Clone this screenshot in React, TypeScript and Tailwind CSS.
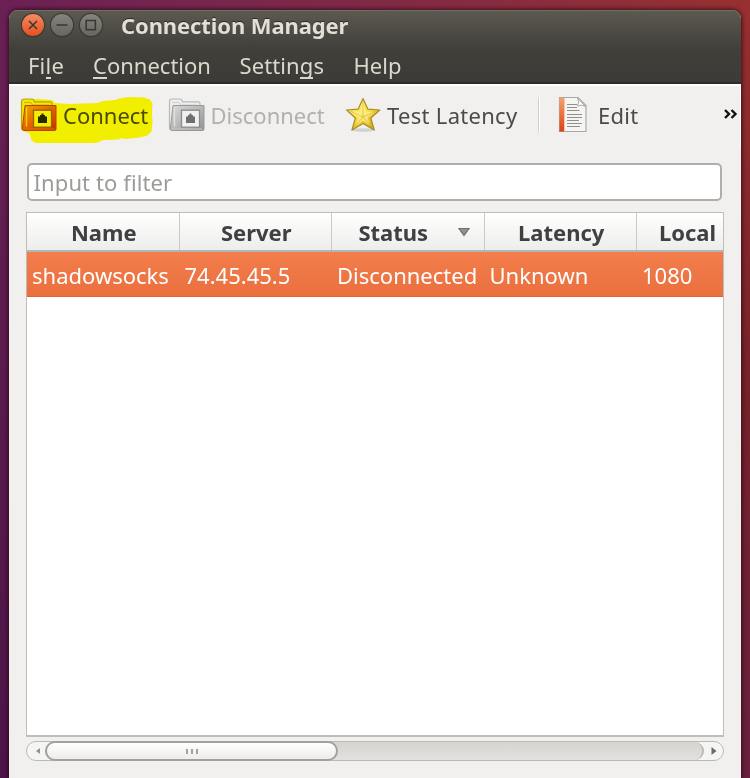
import type { ReactNode } from "react";

function Mnemonic({ children }: { children: ReactNode }) {
  return (
    <span className="relative">
      {children}
      <span className="absolute inset-x-0 top-[27px] h-[2px] bg-[#dcd8ce]" />
    </span>
  );
}

function WindowButton({ kind }: { kind: "close" | "minimize" | "maximize" }) {
  const close = kind === "close";
  return (
    <svg width="26" height="26" viewBox="0 0 26 26" className="shrink-0">
      <defs>
        <linearGradient id={`wb-${kind}`} x1="0" y1="0" x2="0" y2="1">
          <stop offset="0" stopColor={close ? "#f58a62" : "#84837c"} />
          <stop offset="1" stopColor={close ? "#e5501f" : "#67665f"} />
        </linearGradient>
      </defs>
      <circle cx="13" cy="13" r="12.2" fill="#34332f" opacity="0.75" />
      <circle cx="13" cy="13" r="11" fill={`url(#wb-${kind})`} />
      <g stroke="#383631" strokeWidth="1.5" fill="none">
        {close && <path d="M9 9l8 8M17 9l-8 8" />}
        {kind === "minimize" && <path d="M7.5 13h11" />}
        {kind === "maximize" && <rect x="8.2" y="8.5" width="9.2" height="9.2" />}
      </g>
    </svg>
  );
}

function FolderIcon({ active }: { active?: boolean }) {
  const id = active ? "on" : "off";
  return (
    <svg width="38" height="36" viewBox="0 0 38 36" className="shrink-0">
      <defs>
        <linearGradient id={`fold-${id}`} x1="0" y1="0" x2="1" y2="1">
          <stop offset="0" stopColor={active ? "#f0a93a" : "#dadada"} />
          <stop offset="0.5" stopColor={active ? "#e3661c" : "#b8b8b8"} />
          <stop offset="1" stopColor={active ? "#c92a0c" : "#929292"} />
        </linearGradient>
      </defs>
      <path
        d="M1.5 32V4.5Q1.5 2 4 2h8q1.5 0 2 1.5l.5 1.3H30q2 0 2 2V32Z"
        fill={active ? "#f0ead0" : "#eeeeee"}
        stroke={active ? "#b3a555" : "#b9b9b9"}
        strokeWidth="1.2"
      />
      <path d="M4 5.5h7l1.5 2.5H29" fill="none" stroke={active ? "#e0a765" : "#d0d0d0"} />
      <path
        d="M5 8.5h31V32q0 1.5-1.5 1.5H3.5Q2 33.5 2.4 31.5Z"
        fill={`url(#fold-${id})`}
        stroke={active ? "#b0480f" : "#999999"}
        strokeWidth="1"
      />
      <path d="M6.5 10.5v19" stroke={active ? "#ffd27a" : "#e2e2e2"} strokeWidth="1.3" />
      <path d="M4 32h30" stroke={active ? "#e1742c" : "#c7c7c7"} />
      <rect
        x="13.5"
        y="13.2"
        width="18"
        height="17"
        fill={active ? "#f3f0c8" : "#f0f0f0"}
        stroke={active ? "#9b6019" : "#8c8c8c"}
        strokeWidth="1.3"
      />
      <path d="M18 19.5h2V18h1.5v-1.5h2V18H25v1.5h2v6.5h-9Z" fill={active ? "#272722" : "#6e6e6e"} />
    </svg>
  );
}

function StarIcon() {
  return (
    <svg width="36" height="36" viewBox="0 0 36 36" className="shrink-0">
      <defs>
        <linearGradient id="star" x1="0" y1="0" x2="0.7" y2="1">
          <stop offset="0" stopColor="#fff6a0" />
          <stop offset="0.55" stopColor="#f9e040" />
          <stop offset="1" stopColor="#d3a814" />
        </linearGradient>
      </defs>
      <ellipse cx="17" cy="33" rx="12" ry="1.8" fill="#777777" opacity="0.25" />
      <path
        d="M17 1.5l4.8 10.6 12 .9-9 8 3.4 12L17 26.5 6 33l3.4-12-8.8-8 11.6-.9Z"
        fill="url(#star)"
        stroke="#a88a2c"
        strokeWidth="1.2"
        strokeLinejoin="round"
      />
      <path d="M17 6l-3 8.500-8.500.7 7 5.300-2.500 8 7-5 7 5-2.500-8 7-5.300-8.500-.7Z" fill="#fff6a8" opacity="0.6" />
      <path d="M17 3v17l15-6.500M17 20l10 11.500M17 20L7.500 31.500M17 20L3 13.500" fill="none" stroke="#d3ab22" strokeWidth="0.6" />
    </svg>
  );
}

function DocumentIcon() {
  return (
    <svg width="30" height="38" viewBox="0 0 30 38" className="shrink-0">
      <defs>
        <linearGradient id="spine" x1="0" y1="0" x2="0" y2="1">
          <stop offset="0" stopColor="#f2a368" />
          <stop offset="1" stopColor="#dc3f17" />
        </linearGradient>
      </defs>
      <path d="M1.5 1.500H20l8 8V35.500H1.500Z" fill="#f5f5f3" stroke="#aaa9a4" strokeWidth="1.2" />
      <rect x="1.500" y="2" width="4.500" height="33.500" fill="url(#spine)" />
      <path d="M6.500 2v33" stroke="#fbc8a4" />
      <path d="M19.500 2q2.500 4 0 8 4.500-2 8 .5Z" fill="#ffffff" stroke="#aaa9a4" />
      <path
        d="M9 8.500H19M9 11.500H19M9 14.500H21.500M9 18.500H24M9 21.500H24M9 24.500H21M9 27.500H24M9 30.500H22"
        stroke="#8f8f8c"
        strokeWidth="1.1"
      />
    </svg>
  );
}

const columns = ["Name", "Server", "Status", "Latency", "Local Port"];
const row = ["shadowsocks", "74.45.45.5", "Disconnected", "Unknown", "1080"];

export default function App() {
  return (
    <div className="relative flex h-[778px] w-[750px] overflow-hidden bg-linear-to-b from-[#6b2055] to-[#4c1547] pt-[10px] pl-[9px] font-['Noto_Sans',sans-serif] text-[22px] leading-[30px] whitespace-nowrap">
      <div className="absolute inset-y-0 right-0 w-[9px] bg-linear-to-b from-[#97302f] via-[#752229] to-[#68203f]" />
      <div className="absolute top-0 right-0 h-[20px] w-[750px] bg-linear-to-r from-[#6b2055] to-[#97302f]" />
      <div className="relative flex h-[768px] w-[732px] flex-col overflow-hidden rounded-t-[9px] bg-[#f1f0ee] shadow-[0_0_4px_1px_rgba(30,0,15,0.7)]">
        <header className="h-[74px] shrink-0 border-b-2 border-[#2d2c29] bg-linear-to-b from-[#5c5a50] via-[#403f3a] via-55% to-[#3c3b37]">
          <div className="flex h-[32px] items-start border-t border-[#716e63] pl-[10.5px]">
            <div className="mt-[1px] flex gap-[3px]">
              <WindowButton kind="close" />
              <WindowButton kind="minimize" />
              <WindowButton kind="maximize" />
            </div>
            <h1 className="-mt-px ml-[17.5px] font-bold tracking-[-0.1px] text-[#e3dfd4] [text-shadow:0_-1px_0_#2b2a27]">
              Connection Manager
            </h1>
          </div>
          <nav className="flex h-[40px] text-[#dcd8ce]">
            <span className="ml-[19px] w-[65px] pt-[8px] tracking-[0.2px]">
              Fi<Mnemonic>l</Mnemonic>e
            </span>
            <span className="w-[146.5px] pt-[8px]">
              <Mnemonic>C</Mnemonic>onnection
            </span>
            <span className="w-[114px] pt-[8px] tracking-[0.1px]">
              Settin<Mnemonic>g</Mnemonic>s
            </span>
            <span className="pt-[8px]">Help</span>
          </nav>
        </header>

        <div className="flex h-[63px] shrink-0 items-center border-t-2 border-r border-white pb-[4px] text-[#4a4a48]">
          <div className="relative ml-[11px] flex items-center">
            <FolderIcon active />
            <span className="ml-[5px] w-[104.5px]">Connect</span>
            <svg
              className="absolute -top-[2px] left-0 mix-blend-multiply"
              width="136"
              height="48"
              viewBox="0 0 136 48"
            >
              <path
                d="M1 6L4 4h14l14 1 3 3 14 1 28-1 6-2 12-1 4-1.500 10-1.500 15 .5 6 2 2.500 4-.5 10 .5 9-1 9-4 4-8 2-14 1.500-4-1-3 1.500-15 .5-6 2.500-14 1.500-40 1-7-1.500-5-3-2-7L3 36 1 30Z"
                fill="#fffd00"
              />
            </svg>
          </div>
          <div className="flex items-center text-[#b0b0ac]">
            <FolderIcon />
            <span className="ml-[5px] w-[135.5px]">Disconnect</span>
          </div>
          <div className="flex items-center">
            <StarIcon />
            <span className="ml-[5px] w-[151px] tracking-[0.3px]">Test Latency</span>
          </div>
          <div className="h-[36px] w-[2px] border-r border-l border-r-white border-l-[#d2d0cd]" />
          <div className="ml-[18px] flex items-center">
            <DocumentIcon />
            <span className="ml-[10px] tracking-[0.3px]">Edit</span>
          </div>
          <svg className="mr-[2px] ml-auto" width="15" height="12" viewBox="0 0 15 12">
            <path d="M2 1l4 4-4 4M8.500 1l4 4-4 4" fill="none" stroke="#111111" strokeWidth="2.4" />
          </svg>
        </div>

        <div className="mt-[16px] ml-[18px] flex h-[38px] w-[695px] shrink-0 items-center rounded-[5px] border-2 border-[#b0aeab] bg-white pl-[4.5px] tracking-[0.1px] text-[#9c9b97]">
          Input to filter
        </div>

        <div className="mt-[11px] ml-[17px] flex h-[525px] w-[698px] shrink-0 flex-col overflow-hidden border-2 border-t border-r-[1.5px] border-l-[1.5px] border-[#bdbdba] bg-white">
          <div className="flex h-[39px] shrink-0 border-b-2 border-[#aeb8b8] bg-linear-to-b from-white to-[#ededeb] font-bold text-[#3f4041]">
            {columns.map((name) => (
              <div
                key={name}
                className="flex w-[152.5px] shrink-0 items-center justify-center border-r border-[#cbcac7] pl-[2px]"
              >
                {name}
                {name === "Status" && (
                  <svg className="-mr-[12px] ml-[29px]" width="14" height="10" viewBox="0 0 14 10">
                    <path d="M2 1.500h10L7 8.500Z" fill="#92928f" stroke="#6e6e6b" strokeWidth="1.2" />
                  </svg>
                )}
              </div>
            ))}
          </div>
          <div className="flex h-[45px] shrink-0 items-center border-b border-[#e5632e] bg-linear-to-b from-[#f37d4c] to-[#ea703e] pt-px text-white">
            {row.map((cell) => (
              <div key={cell} className="w-[152.5px] shrink-0 pl-[5px]">
                {cell}
              </div>
            ))}
          </div>
        </div>

        <div className="mt-[4px] ml-[17px] flex h-[20px] w-[698px] shrink-0 items-center rounded-full border-[1.5px] border-[#b9b9b5] bg-[#f5f5f3]">
          <svg className="mr-[3px] ml-[7px] shrink-0" width="8" height="10" viewBox="0 0 8 10">
            <path d="M6 2L2 5l4 3Z" fill="#92928f" />
          </svg>
          <div className="flex h-[18px] flex-1 rounded-r-full rounded-l-full border-r-2 border-[#b9b9b5] bg-linear-to-b from-[#d5d4d1] to-[#e2e1de]">
            <div className="-my-px flex h-[20px] w-[293px] items-center justify-center gap-[3px] rounded-full border-2 border-[#a1a19e] bg-linear-to-b from-white to-[#eeedeb]">
              <i className="h-[5px] w-[2px] bg-[#a3a3a0]" />
              <i className="h-[5px] w-[2px] bg-[#a3a3a0]" />
              <i className="h-[5px] w-[2px] bg-[#a3a3a0]" />
            </div>
          </div>
          <svg className="mr-[5px] ml-[6px] shrink-0" width="8" height="10" viewBox="0 0 8 10">
            <path d="M1.500 1l5 4-5 4Z" fill="#6a6b67" />
          </svg>
        </div>
      </div>
    </div>
  );
}
